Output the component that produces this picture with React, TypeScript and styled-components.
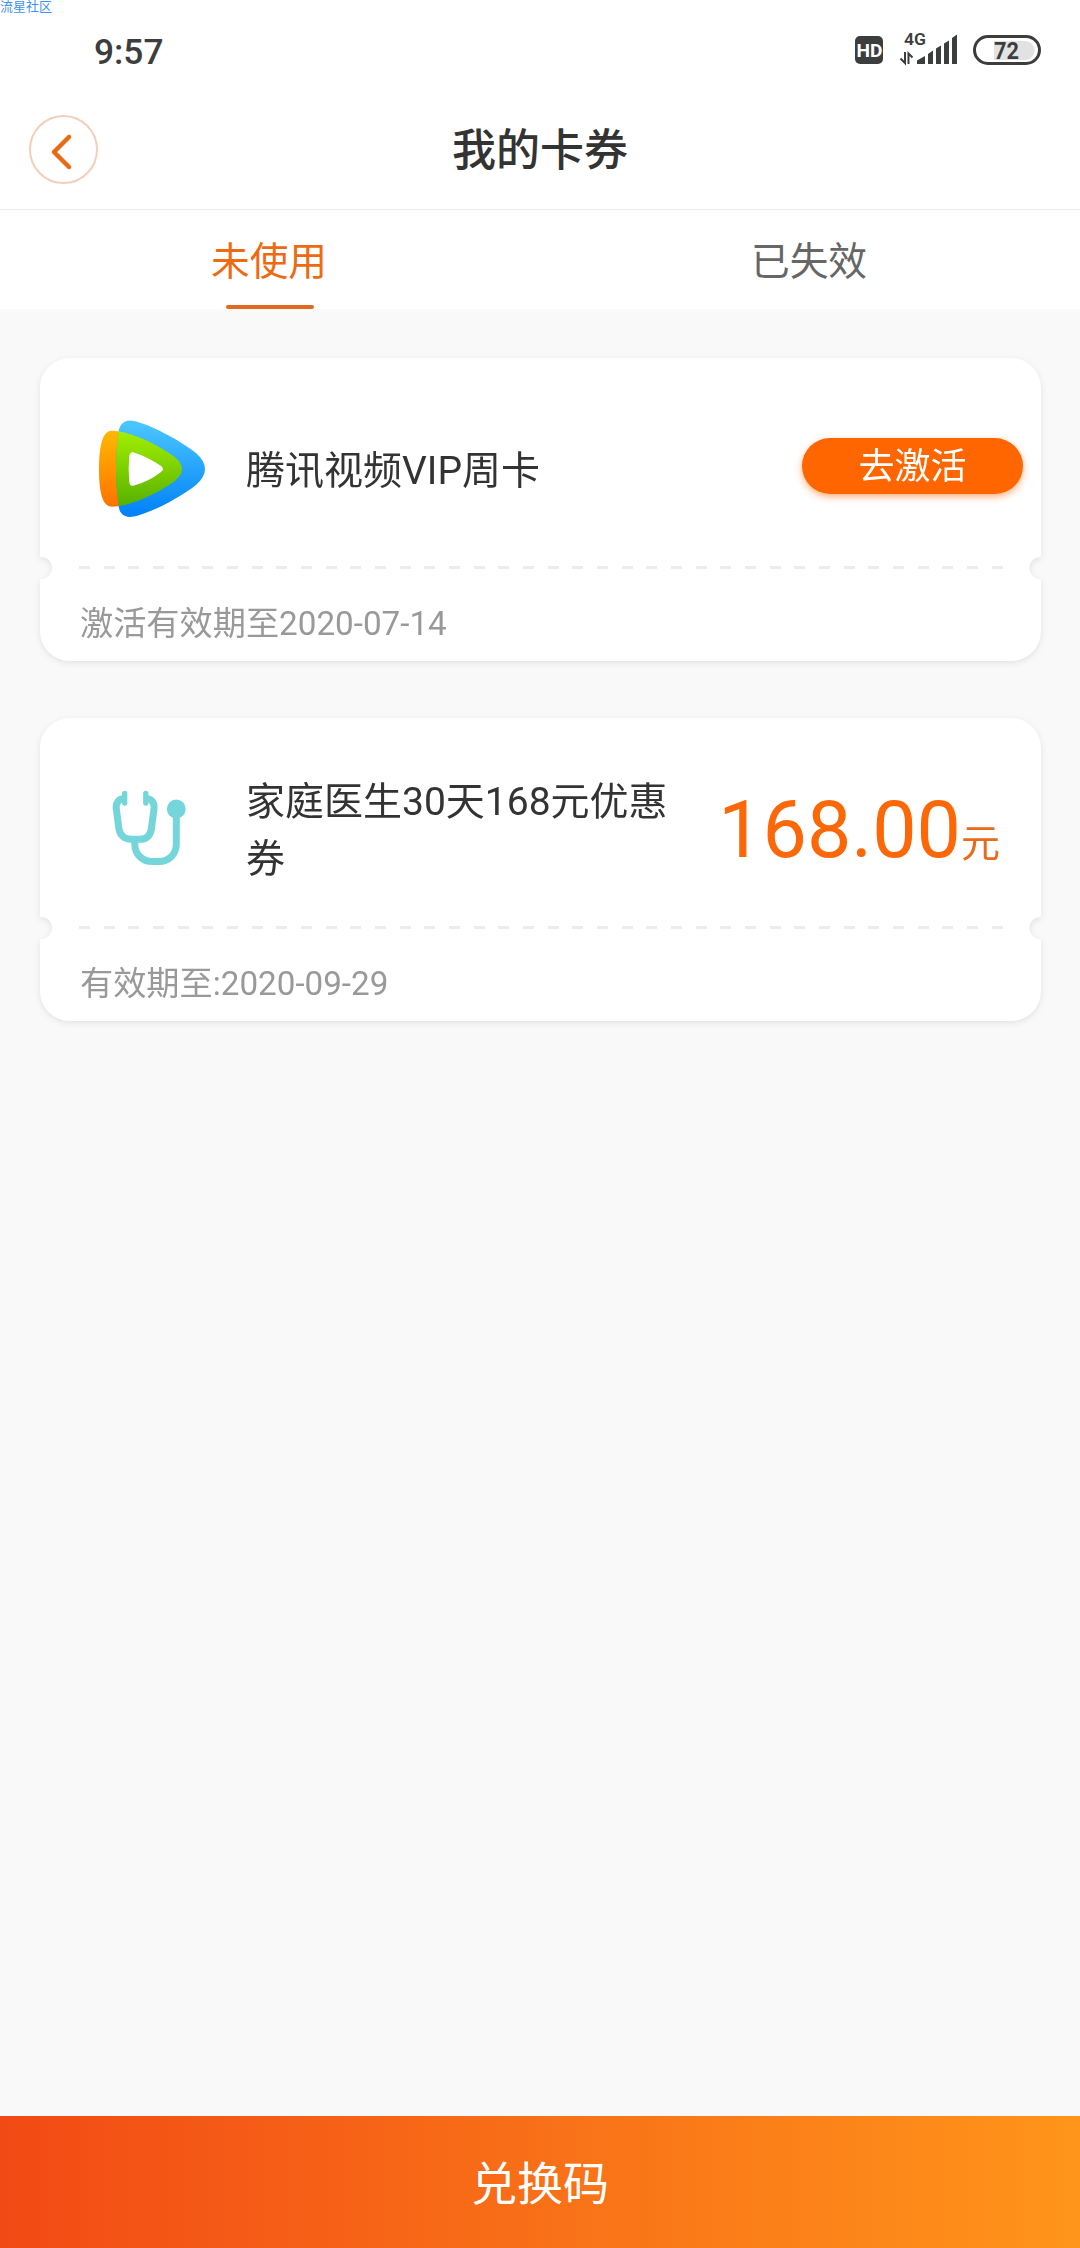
import React from "react";
import styled, { createGlobalStyle } from "styled-components";

const sans = `Roboto, "Noto Sans CJK SC", sans-serif`;

const GlobalStyle = createGlobalStyle`
  * { box-sizing: border-box; }
  body { margin: 0; background: #f9f9f9; font-family: ${sans}; }
`;

const Page = styled.div`
  position: relative;
  display: flex;
  flex-direction: column;
  width: 1080px;
  height: 2248px;
  overflow: hidden;
  background: #f9f9f9;
`;

const Watermark = styled.span`
  position: absolute;
  left: 0;
  top: -3px;
  font-size: 13px;
  line-height: 19px;
  font-weight: 400;
  color: #3d94ee;
`;

const StatusBar = styled.div`
  display: flex;
  align-items: center;
  justify-content: space-between;
  height: 100px;
  padding: 0 39px 0 94px;
  background: #fff;
`;

const Clock = styled.span`
  padding-top: 4px;
  font-size: 35.3px;
  font-weight: 500;
  line-height: 48px;
  color: #3c3d3d;
`;

const StatusIcons = styled.div`
  display: flex;
  align-items: center;
`;

const NavBar = styled.header`
  display: grid;
  grid-template-columns: 68px 1fr 68px;
  align-items: center;
  height: 110px;
  padding: 0 29px 10px;
  background: #fff;
  border-bottom: 1px solid #ececec;
`;

const BackButton = styled.button`
  display: flex;
  align-items: center;
  justify-content: center;
  width: 69px;
  height: 69px;
  padding: 4px 4px 0 0;
  border: 2px solid #f3cfba;
  border-radius: 50%;
  background: transparent;
`;

const Title = styled.h1`
  margin: 0;
  padding-top: 3px;
  text-align: center;
  font-size: 44px;
  line-height: 64px;
  font-weight: 500;
  color: #333;
`;

const Tabs = styled.nav`
  display: grid;
  grid-template-columns: 1fr 1fr;
  height: 99px;
  background: #fff;
`;

const Tab = styled.div<{ $active?: boolean }>`
  display: flex;
  flex-direction: column;
  align-items: center;
  justify-content: space-between;
  padding-top: 24px;
  font-size: 38.7px;
  line-height: 56px;
  color: ${(p) => (p.$active ? "#ee6a12" : "#666")};

  &::after {
    content: "";
    width: 88px;
    height: 4px;
    border-radius: 2px;
    background: ${(p) => (p.$active ? "#e2691e" : "transparent")};
  }
`;

const TabLabel = styled.span`
  padding-right: 2px;
`;

const CardList = styled.main`
  flex: 1;
  display: flex;
  flex-direction: column;
  gap: 57px;
  padding: 49px 39px 0 40px;
`;

const Card = styled.article`
  display: flex;
  flex-direction: column;
  height: 303px;
  filter: drop-shadow(0 2px 3px rgba(0, 0, 0, 0.09));
`;

const CardBody = styled.section`
  display: flex;
  align-items: center;
  height: 210px;
  border-radius: 30px 30px 0 0;
  background: radial-gradient(circle 11px at 1px 100%, transparent 10.5px, #fff 11.5px) left / 51% 100% no-repeat,
    radial-gradient(circle 11px at calc(100% - 1px) 100%, transparent 10.5px, #fff 11.5px) right / 51% 100% no-repeat;
`;

const CardFoot = styled.footer`
  position: relative;
  height: 93px;
  padding: 33px 40px 0;
  border-radius: 0 0 30px 30px;
  background: radial-gradient(circle 11px at 1px 0, transparent 10.5px, #fff 11.5px) left / 51% 100% no-repeat,
    radial-gradient(circle 11px at calc(100% - 1px) 0, transparent 10.5px, #fff 11.5px) right / 51% 100% no-repeat;
  font-size: 33.2px;
  line-height: 46px;
  color: #999;

  &::before {
    content: "";
    position: absolute;
    left: 39px;
    right: 38px;
    top: -2px;
    height: 3px;
    background: repeating-linear-gradient(90deg, #ececec 0 11px, transparent 11px 24.67px);
  }
`;

const Artwork = styled.div`
  display: flex;
  flex: 0 0 206px;
  padding: 12px 0 0 58px;
`;

const CardTitle = styled.h2`
  flex: 0 1 430px;
  margin: 0;
  padding-top: 16px;
  font-size: 39px;
  line-height: 57px;
  font-weight: 400;
  color: #333;
`;

const ActivateButton = styled.button`
  width: 221px;
  height: 56px;
  margin: 5px 18px 0 auto;
  padding: 3px 0 0;
  border: 0;
  border-radius: 28px;
  background: #ff6600;
  box-shadow: 0 3px 7px rgba(255, 102, 0, 0.5);
  font-family: ${sans};
  font-size: 36px;
  line-height: 53px;
  color: #fff;
`;

const Price = styled.div`
  display: flex;
  align-items: baseline;
  justify-content: flex-end;
  flex: none;
  margin-left: auto;
  padding: 14px 41px 0 0;
  font-size: 79px;
  line-height: 94px;
  color: #fc6808;
`;

const Unit = styled.span`
  font-size: 39px;
  line-height: 50px;
  color: #e96a18;
`;

const RedeemBar = styled.button`
  display: flex;
  align-items: center;
  justify-content: center;
  height: 132px;
  padding: 3px 0 0;
  border: 0;
  background: linear-gradient(90deg, #f24a15, #ff951a);
  font-family: ${sans};
  font-size: 46px;
  line-height: 66px;
  color: #fff;
`;

const StatusGlyphs = () => (
  <svg width="186" height="60" viewBox="855 20 186 60">
    <rect x="855" y="36" width="28" height="28" rx="5" fill="#3c3d3d" />
    <text x="869.500" y="57" textAnchor="middle" fontFamily="Roboto" fontWeight="700" fontSize="18.500" textLength="26" lengthAdjust="spacingAndGlyphs" fill="#fff">HD</text>
    <text x="904" y="45.300" fontFamily="Roboto" fontWeight="600" fontSize="16" textLength="22" lengthAdjust="spacingAndGlyphs" fill="#3c3d3d">4G</text>
    <path d="M900.500 58.500L905 63V52" fill="none" stroke="#3c3d3d" strokeWidth="2" />
    <path d="M908.500 64V53.500L912.500 57.500" fill="none" stroke="#3c3d3d" strokeWidth="2" />
    <path d="M917 60.500L925 56V64H917ZM928 54L933 50.500V64H928ZM936 48.500L941 45.500V64H936ZM944 43.500L949 40.500V64H944ZM952 38L957 34.500V64H952Z" fill="#3c3d3d" />
    <path d="M994 41H1025A9.500 9.500 0 0 1 1025 60H994Z" fill="#e2e2e2" />
    <rect x="974.500" y="36.500" width="65" height="27" rx="13.500" fill="none" stroke="#3c3d3d" strokeWidth="3" />
    <text x="1006.500" y="58.700" textAnchor="middle" fontFamily="Roboto" fontWeight="700" fontSize="24.500" textLength="25" lengthAdjust="spacingAndGlyphs" fill="#3c3d3d">72</text>
  </svg>
);

const BackGlyph = () => (
  <svg width="24" height="38" viewBox="0 0 24 38">
    <path d="M19 4L4 19L19 34" fill="none" stroke="#ea6a14" strokeWidth="4.500" strokeLinecap="round" strokeLinejoin="round" />
  </svg>
);

const frontShape =
  "M112 430.700C126 431 150 440 172 455Q192 469 172 483C150 498 126 506.500 112 506.700C104 506.700 99 497 99 469S104 430.700 112 430.700Z";
const backShape =
  "M130 420.500C142 421 174 436 196 453Q214 469 196 485C174 502 142 516.500 130 517C123 517 118.500 512 118.500 504Q113.500 469 118.500 434C118.500 426 123 420.500 130 420.500Z";

const VideoLogo = () => (
  <svg width="108" height="98" viewBox="98 420 108 98">
    <defs>
      <linearGradient id="blue" x1="0" y1="0" x2="0" y2="1">
        <stop offset="0" stopColor="#4cc8ff" />
        <stop offset="1" stopColor="#0080f8" />
      </linearGradient>
      <linearGradient id="orange" x1="0" y1="0" x2="0" y2="1">
        <stop offset="0" stopColor="#ffb800" />
        <stop offset="1" stopColor="#ff7200" />
      </linearGradient>
      <linearGradient id="green" x1="0" y1="0" x2="0" y2="1">
        <stop offset="0.100" stopColor="#a4f000" />
        <stop offset="0.900" stopColor="#55b000" />
      </linearGradient>
      <clipPath id="front">
        <path d={frontShape} />
      </clipPath>
    </defs>
    <path d={frontShape} fill="url(#orange)" />
    <path d={backShape} fill="url(#blue)" />
    <path clipPath="url(#front)" d={backShape} fill="url(#green)" />
    <path d="M134 452.500Q148 457 161 466Q165 469 161 472Q148 482 134 485.500Q130 487 129.300 482Q128 469 129.300 456Q130 451 134 452.500Z" fill="#fff" />
  </svg>
);

const Stethoscope = () => (
  <svg width="108" height="98" viewBox="98 780 108 98">
    <g fill="none" stroke="#74d6da" strokeWidth="7" strokeLinejoin="round">
      <path d="M124.700 793.500V803M145.800 793.500V803" strokeWidth="5.300" strokeLinecap="round" />
      <path d="M124 798.500C119 799 115.800 802 116.200 808L118.800 828C120 836 125 839.300 131 839.300H140C146 839.300 150.500 836 151.500 828L154.100 808C154.500 802 151 799 146.500 798.500" />
      <path d="M134.800 840V844C134.800 855 143 861.500 152 861.500H159C169 861.500 176.300 854 176.300 844V812" />
    </g>
    <circle cx="176.300" cy="809" r="9.400" fill="#74d6da" />
  </svg>
);

export default function App() {
  return (
    <>
      <GlobalStyle />
      <Page>
        <StatusBar>
          <Clock>9:57</Clock>
          <StatusIcons>
            <StatusGlyphs />
          </StatusIcons>
        </StatusBar>
        <NavBar>
          <BackButton aria-label="返回">
            <BackGlyph />
          </BackButton>
          <Title>我的卡券</Title>
        </NavBar>
        <Tabs>
          <Tab $active>
            <TabLabel>未使用</TabLabel>
          </Tab>
          <Tab>
            <TabLabel>已失效</TabLabel>
          </Tab>
        </Tabs>
        <CardList>
          <Card>
            <CardBody>
              <Artwork>
                <VideoLogo />
              </Artwork>
              <CardTitle>腾讯视频VIP周卡</CardTitle>
              <ActivateButton>去激活</ActivateButton>
            </CardBody>
            <CardFoot>激活有效期至2020-07-14</CardFoot>
          </Card>
          <Card>
            <CardBody>
              <Artwork>
                <Stethoscope />
              </Artwork>
              <CardTitle>家庭医生30天168元优惠券</CardTitle>
              <Price>
                168.00<Unit>元</Unit>
              </Price>
            </CardBody>
            <CardFoot>有效期至:2020-09-29</CardFoot>
          </Card>
        </CardList>
        <RedeemBar>兑换码</RedeemBar>
        <Watermark>流星社区</Watermark>
      </Page>
    </>
  );
}
